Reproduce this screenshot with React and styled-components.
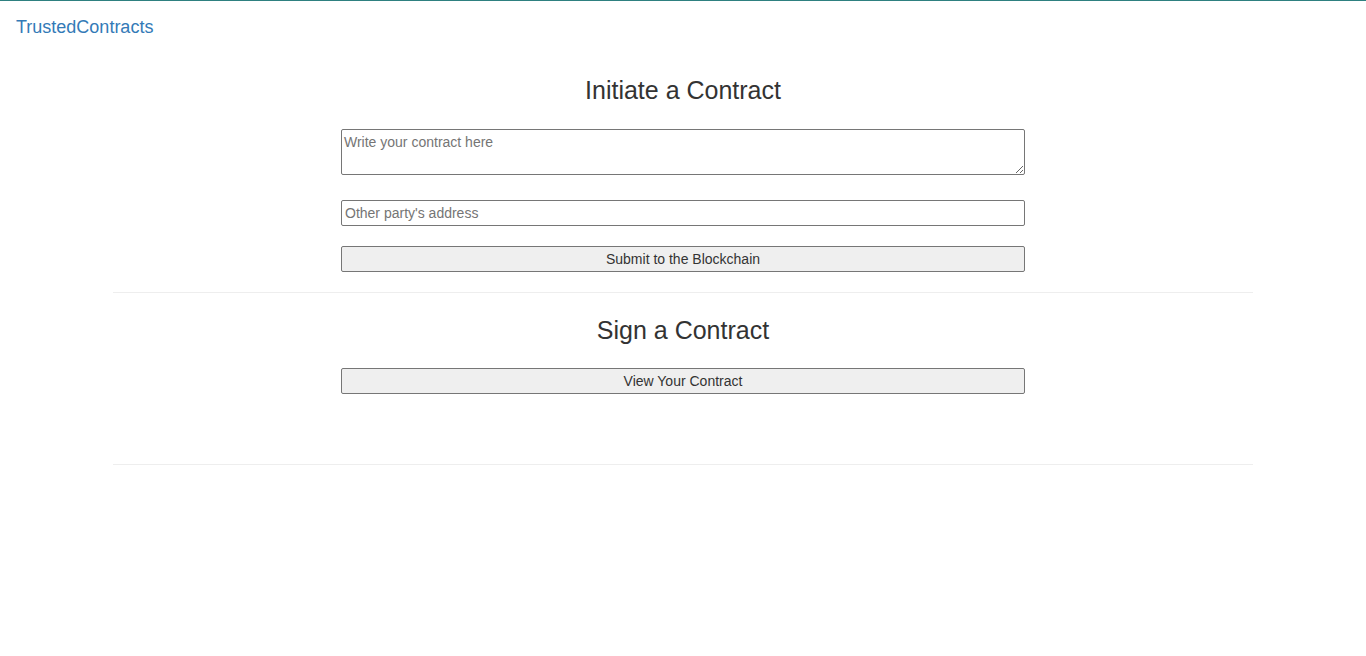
import styled, { createGlobalStyle } from "styled-components";

const GlobalStyle = createGlobalStyle`
  html, body {
    margin: 0;
    padding: 0;
    background: #fff;
  }
  body {
    font-family: "Liberation Sans", Arial, sans-serif;
    font-size: 14px;
    line-height: 1.42857;
    color: #333;
  }
  * {
    box-sizing: border-box;
  }
`;

const Navbar = styled.nav`
  height: 51px;
  border-top: 1px solid #2e8080;
  display: flex;
  align-items: center;
  padding: 2px 16px 0;
`;

const Brand = styled.a`
  font-size: 18px;
  line-height: 20px;
  color: #337ab7;
  text-decoration: none;
  cursor: pointer;
`;

const Container = styled.main`
  width: 1140px;
  margin: 0 auto;
`;

const Section = styled.section`
  display: flex;
  flex-direction: column;
  align-items: center;
  padding-top: ${(p) => p.$top}px;
  padding-bottom: ${(p) => p.$bottom}px;
`;

const Heading = styled.h3`
  margin: 0 0 ${(p) => p.$gap || 25}px;
  font-size: 25px;
  font-weight: 500;
  line-height: 26px;
  color: #333;
`;

const Form = styled.form`
  width: 684px;
  display: flex;
  flex-direction: column;
`;

const TextArea = styled.textarea`
  width: 100%;
  height: 46px;
  margin: 0 0 25px;
  padding: 4px 2px 2px;
  border: 1px solid #767676;
  border-radius: 2px;
  font-family: "Liberation Sans", Arial, sans-serif;
  font-size: 14px;
  line-height: 1.2;
  color: #333;
  resize: vertical;
  &::placeholder {
    color: #757575;
  }
`;

const Input = styled.input`
  width: 100%;
  height: 26px;
  margin: 0 0 20px;
  padding: 1px 3px;
  border: 1px solid #767676;
  border-radius: 2px;
  font-family: "Liberation Sans", Arial, sans-serif;
  font-size: 14px;
  color: #333;
  &::placeholder {
    color: #757575;
  }
`;

const Button = styled.button`
  width: 100%;
  height: 26px;
  padding: 1px 6px;
  border: 1px solid #767676;
  border-radius: 2px;
  background: #efefef;
  font-family: "Liberation Sans", Arial, sans-serif;
  font-size: 14px;
  color: #333;
  cursor: pointer;
`;

const Divider = styled.hr`
  margin: 0;
  border: 0;
  border-top: 1px solid #eee;
`;

export default function App() {
  return (
    <>
      <GlobalStyle />
      <Navbar>
        <Brand>TrustedContracts</Brand>
      </Navbar>
      <Container>
        <Section $top={26} $bottom={20}>
          <Heading $gap={26}>Initiate a Contract</Heading>
          <Form onSubmit={(e) => e.preventDefault()}>
            <TextArea placeholder="Write your contract here" />
            <Input placeholder="Other party's address" />
            <Button type="submit">Submit to the Blockchain</Button>
          </Form>
        </Section>
        <Divider />
        <Section $top={24} $bottom={70}>
          <Heading $gap={25}>Sign a Contract</Heading>
          <Form onSubmit={(e) => e.preventDefault()}>
            <Button type="button">View Your Contract</Button>
          </Form>
        </Section>
        <Divider />
      </Container>
    </>
  );
}
